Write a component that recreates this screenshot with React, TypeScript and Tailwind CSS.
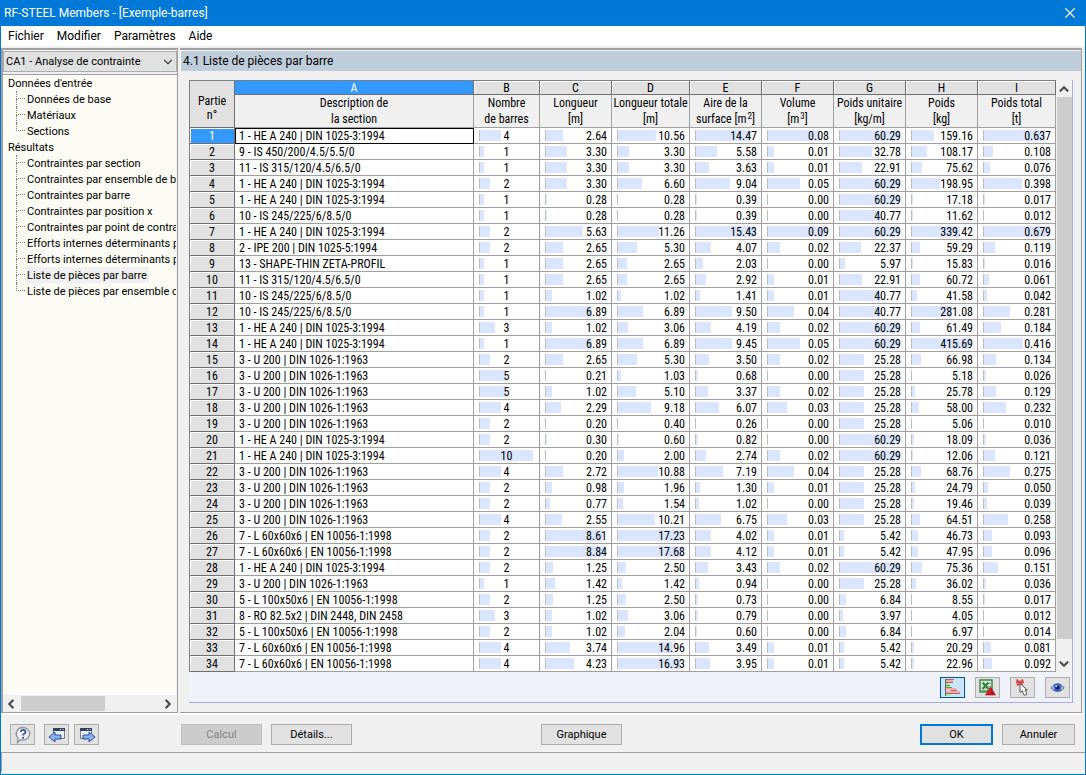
import { ChevronDown, ChevronLeft, ChevronRight, ChevronUp, X } from "lucide-react";
import clsx from "clsx";
import type { ReactNode } from "react";

type Row = [string, number, string, string, string, string, string, string, string];

const menus = ["Fichier", "Modifier", "Paramètres", "Aide"];

const tree = [
  { title: "Données d'entrée", items: ["Données de base", "Matériaux", "Sections"] },
  {
    title: "Résultats",
    items: [
      "Contraintes par section",
      "Contraintes par ensemble de barres",
      "Contraintes par barre",
      "Contraintes par position x",
      "Contraintes par point de contrainte",
      "Efforts internes déterminants par",
      "Efforts internes déterminants par",
      "Liste de pièces par barre",
      "Liste de pièces par ensemble de",
    ],
  },
];

const selectedItem = "Liste de pièces par barre";

const columns: { letter: string; top: string; bottom: ReactNode; max: number; width: string }[] = [
  { letter: "B", top: "Nombre", bottom: "de barres", max: 10, width: "w-[66px]" },
  { letter: "C", top: "Longueur", bottom: "[m]", max: 8.84, width: "w-[72px]" },
  { letter: "D", top: "Longueur totale", bottom: "[m]", max: 17.68, width: "w-[78px]" },
  { letter: "E", top: "Aire de la", bottom: <>surface [m<Sup>2</Sup>]</>, max: 15.43, width: "w-[72px]" },
  { letter: "F", top: "Volume", bottom: <>[m<Sup>3</Sup>]</>, max: 0.09, width: "w-[72px]" },
  { letter: "G", top: "Poids unitaire", bottom: "[kg/m]", max: 60.29, width: "w-[72px]" },
  { letter: "H", top: "Poids", bottom: "[kg]", max: 415.69, width: "w-[72px]" },
  { letter: "I", top: "Poids total", bottom: "[t]", max: 0.679, width: "w-[78px]" },
];

const HEA = "1 - HE A 240 | DIN 1025-3:1994";
const U200 = "3 - U 200 | DIN 1026-1:1963";
const L60 = "7 - L 60x60x6 | EN 10056-1:1998";
const L100 = "5 - L 100x50x6 | EN 10056-1:1998";

const rows: Row[] = [
  [HEA, 4, "2.64", "10.56", "14.47", "0.08", "60.29", "159.16", "0.637"],
  ["9 - IS 450/200/4.5/5.5/0", 1, "3.30", "3.30", "5.58", "0.01", "32.78", "108.17", "0.108"],
  ["11 - IS 315/120/4.5/6.5/0", 1, "3.30", "3.30", "3.63", "0.01", "22.91", "75.62", "0.076"],
  [HEA, 2, "3.30", "6.60", "9.04", "0.05", "60.29", "198.95", "0.398"],
  [HEA, 1, "0.28", "0.28", "0.39", "0.00", "60.29", "17.18", "0.017"],
  ["10 - IS 245/225/6/8.5/0", 1, "0.28", "0.28", "0.39", "0.00", "40.77", "11.62", "0.012"],
  [HEA, 2, "5.63", "11.26", "15.43", "0.09", "60.29", "339.42", "0.679"],
  ["2 - IPE 200 | DIN 1025-5:1994", 2, "2.65", "5.30", "4.07", "0.02", "22.37", "59.29", "0.119"],
  ["13 - SHAPE-THIN ZETA-PROFIL", 1, "2.65", "2.65", "2.03", "0.00", "5.97", "15.83", "0.016"],
  ["11 - IS 315/120/4.5/6.5/0", 1, "2.65", "2.65", "2.92", "0.01", "22.91", "60.72", "0.061"],
  ["10 - IS 245/225/6/8.5/0", 1, "1.02", "1.02", "1.41", "0.01", "40.77", "41.58", "0.042"],
  ["10 - IS 245/225/6/8.5/0", 1, "6.89", "6.89", "9.50", "0.04", "40.77", "281.08", "0.281"],
  [HEA, 3, "1.02", "3.06", "4.19", "0.02", "60.29", "61.49", "0.184"],
  [HEA, 1, "6.89", "6.89", "9.45", "0.05", "60.29", "415.69", "0.416"],
  [U200, 2, "2.65", "5.30", "3.50", "0.02", "25.28", "66.98", "0.134"],
  [U200, 5, "0.21", "1.03", "0.68", "0.00", "25.28", "5.18", "0.026"],
  [U200, 5, "1.02", "5.10", "3.37", "0.02", "25.28", "25.78", "0.129"],
  [U200, 4, "2.29", "9.18", "6.07", "0.03", "25.28", "58.00", "0.232"],
  [U200, 2, "0.20", "0.40", "0.26", "0.00", "25.28", "5.06", "0.010"],
  [HEA, 2, "0.30", "0.60", "0.82", "0.00", "60.29", "18.09", "0.036"],
  [HEA, 10, "0.20", "2.00", "2.74", "0.02", "60.29", "12.06", "0.121"],
  [U200, 4, "2.72", "10.88", "7.19", "0.04", "25.28", "68.76", "0.275"],
  [U200, 2, "0.98", "1.96", "1.30", "0.01", "25.28", "24.79", "0.050"],
  [U200, 2, "0.77", "1.54", "1.02", "0.00", "25.28", "19.46", "0.039"],
  [U200, 4, "2.55", "10.21", "6.75", "0.03", "25.28", "64.51", "0.258"],
  [L60, 2, "8.61", "17.23", "4.02", "0.01", "5.42", "46.73", "0.093"],
  [L60, 2, "8.84", "17.68", "4.12", "0.01", "5.42", "47.95", "0.096"],
  [HEA, 2, "1.25", "2.50", "3.43", "0.02", "60.29", "75.36", "0.151"],
  [U200, 1, "1.42", "1.42", "0.94", "0.00", "25.28", "36.02", "0.036"],
  [L100, 2, "1.25", "2.50", "0.73", "0.00", "6.84", "8.55", "0.017"],
  ["8 - RO 82.5x2 | DIN 2448, DIN 2458", 3, "1.02", "3.06", "0.79", "0.00", "3.97", "4.05", "0.012"],
  [L100, 2, "1.02", "2.04", "0.60", "0.00", "6.84", "6.97", "0.014"],
  [L60, 4, "3.74", "14.96", "3.49", "0.01", "5.42", "20.29", "0.081"],
  [L60, 4, "4.23", "16.93", "3.95", "0.01", "5.42", "22.96", "0.092"],
];

function Sup({ children }: { children: ReactNode }) {
  return <sup className="relative -top-1 ml-px align-baseline text-[9px] leading-none">{children}</sup>;
}

function BarCell({ value, max, center }: { value: string; max: number; center?: boolean }) {
  return (
    <td className="border-r border-b border-[#a0a0a0] p-0">
      <div className="grid h-[15px] items-center">
        <div className="col-start-1 row-start-1 mr-1.5 ml-[5px]">
          <div
            className="h-[11px] min-w-px border-l border-[#c0c0c0] bg-[#dae5ff]"
            style={{ width: `${(Number(value) / max) * 100}%` }}
          />
        </div>
        <span
          className={clsx(
            "z-10 col-start-1 row-start-1 pt-px leading-[14px]",
            center ? "text-center" : "pr-1 text-right"
          )}
        >
          {value}
        </span>
      </div>
    </td>
  );
}

function PartsTable() {
  return (
    <table className="w-full table-fixed border-separate border-spacing-0 border-t border-l border-[#808080] bg-white font-['Roboto_Condensed','Roboto',sans-serif] text-xs whitespace-nowrap text-black">
      <colgroup>
        <col className="w-[45px]" />
        <col />
        {columns.map((c) => (
          <col key={c.letter} className={c.width} />
        ))}
      </colgroup>
      <thead>
        <tr className="h-[14px]">
          <th
            rowSpan={2}
            className="border-r border-b border-[#707070] bg-[#e1e1e1] p-0 pt-2 font-normal leading-[14px]"
          >
            Partie
            <br />
            n°
          </th>
          <th className="border-r border-b border-[#707070] bg-[#3399ff] p-0 pt-px leading-3 font-normal text-white">A</th>
          {columns.map((c) => (
            <th
              key={c.letter}
              className="border-r border-b border-[#707070] bg-[#e1e1e1] p-0 pt-px leading-3 font-normal shadow-[inset_1px_1px_0_#fff]"
            >
              {c.letter}
            </th>
          ))}
        </tr>
        <tr className="h-[33px]">
          <th className="border-r border-b border-[#a0a0a0] bg-[#f0f0f0] p-0 leading-4 font-normal">
            Description de
            <br />
            la section
          </th>
          {columns.map((c) => (
            <th key={c.letter} className="border-r border-b border-[#a0a0a0] bg-[#f0f0f0] p-0 leading-4 font-normal">
              {c.top}
              <br />
              {c.bottom}
            </th>
          ))}
        </tr>
      </thead>
      <tbody>
        {rows.map((row, i) => (
          <tr key={i} className="h-4">
            <th
              className={clsx(
                "border-r border-b border-[#707070] p-0 pt-px leading-[14px] font-normal shadow-[inset_1px_1px_0_#fff]",
                i === 0 ? "bg-[#3399ff] text-white" : "bg-[#e1e1e1]"
              )}
            >
              {i + 1}
            </th>
            <td
              className={clsx(
                "border-r border-b border-[#a0a0a0] p-0 pt-px pl-1 leading-[14px]",
                i === 0 && "outline outline-1 -outline-offset-1 outline-black"
              )}
            >
              {row[0]}
            </td>
            {columns.map((c, j) => (
              <BarCell key={c.letter} value={String(row[j + 1])} max={c.max} center={j === 0} />
            ))}
          </tr>
        ))}
      </tbody>
    </table>
  );
}

function TreeNav() {
  return (
    <nav className="mr-px flex-1 overflow-hidden bg-[#fcfcf4] whitespace-nowrap">
      {tree.map((group) => (
        <div key={group.title}>
          <div className="h-4 pt-px pl-[5px] leading-4">{group.title}</div>
          <ul>
            {group.items.map((item, i) => (
              <li key={i} className="flex h-4 pl-[13px]">
                <span className="mr-px h-4 w-[9px] shrink-0">
                  <span className="block h-2 border-b border-l border-dotted border-[#808080]" />
                  {i < group.items.length - 1 && (
                    <span className="block h-2 border-l border-dotted border-[#808080]" />
                  )}
                </span>
                <button
                  className={clsx(
                    "h-4 min-w-0 overflow-hidden px-px pt-px text-left leading-4",
                    item === selectedItem && "bg-[#f0f0f0] pr-0.5"
                  )}
                >
                  {item}
                </button>
              </li>
            ))}
          </ul>
        </div>
      ))}
    </nav>
  );
}

function IconButton({ label, active, children }: { label: string; active?: boolean; children: ReactNode }) {
  return (
    <button
      aria-label={label}
      className={clsx(
        "flex h-[21px] w-[25px] items-center justify-center border",
        active ? "border-[#005499] bg-[#cce4f7]" : "border-[#adadad] bg-[#e1e1e1]"
      )}
    >
      {children}
    </button>
  );
}

function PushButton({ children, className, disabled }: { children: ReactNode; className: string; disabled?: boolean }) {
  return (
    <button
      disabled={disabled}
      className={clsx(
        "h-[21px] pt-px leading-4",
        disabled ? "border border-[#bfbfbf] bg-[#cccccc] text-[#838383]" : "bg-[#e1e1e1]",
        className
      )}
    >
      {children}
    </button>
  );
}

const BarsIcon = () => (
  <svg width="17" height="17" viewBox="0 0 17 17" shapeRendering="crispEdges">
    <path d="M2 2h7M2 10h10M2 13h14" stroke="#ffa3a3" strokeWidth="2" />
    <path d="M2 5h3M2 8h4M2 16h5" stroke="#a2eda2" strokeWidth="2" />
    <path d="M2 .500h8M2 3.500h7M7 11.500h6M2 14.500h14" stroke="#a06c6c" />
    <path d="M2 6.500h4M2 8.500h6" stroke="#5b9c5b" />
    <path d="M1.500 0V17" stroke="#666" />
  </svg>
);

const ExcelIcon = () => (
  <svg width="17" height="17" viewBox="0 0 17 17">
    <rect x="1" y="1" width="12" height="12" fill="#dff0df" stroke="#357f3c" strokeWidth="1.400" />
    <path d="M9.500 4.500h3M9.500 7.500h3M2 11.500h10" stroke="#6da873" />
    <path d="M3.500 3.500l6 6.500M9.500 3.500l-6 6.500" stroke="#2f8038" strokeWidth="2.200" />
    <path d="M11.500 8L16.500 16H6.500z" fill="#dd1a22" stroke="#96151a" strokeWidth=".6" />
    <path d="M12 10v5.500h3.500z" fill="#a81218" />
  </svg>
);

const PickIcon = () => (
  <svg width="17" height="17" viewBox="0 0 17 17">
    <path d="M2.500 .500l6 6M9 .500l-6 6M2 3.300h8" stroke="#dc4a4e" strokeWidth="2" />
    <path d="M6 4.500v9l2.200-1.700 2 4.500 2.800-1.200-2-4.100h2.300z" fill="#fff" stroke="#555" />
  </svg>
);

const EyeIcon = () => (
  <svg width="17" height="17" viewBox="0 0 17 17">
    <path d="M2 9c3-5.500 10-5.500 13 0-3 4.500-10 4.500-13 0z" fill="#c9d3ea" stroke="#5a6784" />
    <circle cx="8.500" cy="8.500" r="4" fill="#3563d0" />
    <circle cx="8.500" cy="8.500" r="1.900" fill="#101c48" />
    <circle cx="7.300" cy="7.200" r="1" fill="#b9d2ff" />
  </svg>
);

const HelpIcon = () => (
  <svg width="18" height="18" viewBox="0 0 18 18">
    <path
      d="M9 1.500a6.800 6.300 0 1 1-2.500 12.200L3.500 16.500l.5-4.500A6.800 6.300 0 0 1 9 1.500z"
      fill="#eef0f5"
      stroke="#8d929c"
      strokeWidth="1.300"
    />
    <path d="M6.800 5.800q.3-2 2.500-2t2.200 2q0 1.300-1.400 2-.9.500-.9 1.700" fill="none" stroke="#3a5690" strokeWidth="1.800" />
    <circle cx="9.100" cy="11.800" r="1.100" fill="#3a5690" />
  </svg>
);

const WindowArrowIcon = ({ next }: { next?: boolean }) => (
  <svg width="18" height="18" viewBox="0 0 18 18">
    <path d={next ? "M2.500 2.500h11v10h-11z" : "M5.500 2.500h11v10h-11z"} fill="#eef0f4" stroke="#7b7f88" />
    <path d={next ? "M2 2h12v3H2z" : "M5 2h12v3H5z"} fill="#34405f" />
    <path d={next ? "M9 3.500h1M11.500 3.500h1" : "M12 3.500h1M14.500 3.500h1"} stroke="#dfe6f5" />
    <path
      d={next ? "M5 9h6V6l6 5-6 5v-3H5z" : "M13 9H7V6l-6 5 6 5v-3h6z"}
      fill="#86b1f2"
      stroke="#2d4f98"
    />
  </svg>
);

export default function App() {
  return (
    <div className="flex h-screen flex-col overflow-hidden border border-t-0 border-[#0078d7] bg-[#f0f0f0] font-['Roboto','Noto_Sans',sans-serif] text-[11px] text-black">
      <header className="flex h-[26px] shrink-0 items-center justify-between bg-[#0078d7] pr-1.5 pl-[3px] text-white">
        <h1 className="text-xs">RF-STEEL Members - [Exemple-barres]</h1>
        <button aria-label="Fermer">
          <X size={18} strokeWidth={1.5} />
        </button>
      </header>

      <div className="flex h-5 shrink-0 items-center gap-[13px] bg-white pl-[7px] text-xs">
        {menus.map((m) => (
          <button key={m}>{m}</button>
        ))}
      </div>

      <div className="mt-0.5 flex min-h-0 flex-1">
        <aside className="mr-[2px] flex w-[177px] shrink-0 flex-col border-2 border-r border-b border-[#a0a0a0]">
          <div className="grid shrink-0 items-center border-t border-b border-t-white border-b-[#a0a0a0] pb-0.5">
            <select
              aria-label="Cas"
              className="col-start-1 row-start-1 h-[21px] w-full appearance-none border border-[#adadad] bg-[#e1e1e1] pt-0.5 pl-0.5"
            >
              <option>CA1 - Analyse de contrainte</option>
            </select>
            <ChevronDown
              size={14}
              strokeWidth={2}
              className="pointer-events-none col-start-1 row-start-1 mr-0.5 justify-self-end text-[#444]"
            />
          </div>
          <TreeNav />
          <div className="flex h-[17px] shrink-0 items-center bg-[#f0f0f0] text-[#505050]">
            <ChevronLeft size={14} strokeWidth={4} className="mr-[3px] ml-px" />
            <div className="h-[15px] w-[84px] bg-[#cdcdcd]" />
            <ChevronRight size={14} strokeWidth={4} className="mr-0.5 ml-auto" />
          </div>
        </aside>

        <main className="mr-[3px] flex min-w-0 flex-1 flex-col border-t-2 border-r border-b border-[#a0a0a0]">
          <h2 className="mt-px h-5 shrink-0 border-l border-white bg-[#bfcddb] pl-0.5 text-xs leading-5">
            4.1 Liste de pièces par barre
          </h2>
          <div className="mt-[9px] mr-2 mb-[9px] ml-[9px] flex min-h-0 flex-1 flex-col border-r border-b border-[#a6a8ea] bg-[#eff3f9]">
            <div className="flex shrink-0">
              <div className="min-w-0 flex-1">
                <PartsTable />
              </div>
              <div className="flex w-4 shrink-0 flex-col items-center bg-[#f0f0f0] text-[#505050]">
                <ChevronUp size={14} strokeWidth={4} className="mt-0.5 mb-px shrink-0" />
                <div className="w-[15px] flex-1 bg-[#cdcdcd]" />
                <div className="h-[18px]" />
                <ChevronDown size={14} strokeWidth={4} className="mb-px shrink-0" />
              </div>
            </div>
            <div className="mt-[5px] flex justify-end gap-2.5 pr-0.5">
              <IconButton label="Barres" active>
                <BarsIcon />
              </IconButton>
              <IconButton label="Exporter vers Excel">
                <ExcelIcon />
              </IconButton>
              <IconButton label="Sélectionner">
                <PickIcon />
              </IconButton>
              <IconButton label="Vue">
                <EyeIcon />
              </IconButton>
            </div>
          </div>
        </main>
      </div>

      <footer className="shrink-0 border-t-2 border-white">
        <div className="flex items-center pt-[9px] pr-2.5 pb-[7px] pl-[9px]">
          <div className="flex w-[171px] shrink-0">
            <IconButton label="Aide">
              <HelpIcon />
            </IconButton>
            <div className="ml-[9px] flex gap-[5px]">
              <IconButton label="Précédent">
                <WindowArrowIcon />
              </IconButton>
              <IconButton label="Suivant">
                <WindowArrowIcon next />
              </IconButton>
            </div>
          </div>
          <PushButton className="w-[81px]" disabled>
            Calcul
          </PushButton>
          <PushButton className="ml-[9px] w-[81px] border border-[#adadad]">Détails...</PushButton>
          <PushButton className="ml-[189px] w-[81px] border border-[#adadad]">Graphique</PushButton>
          <PushButton className="ml-auto w-[73px] border-2 border-[#0078d7]">OK</PushButton>
          <PushButton className="ml-[9px] w-[73px] border border-[#adadad]">Annuler</PushButton>
        </div>
        <div className="mb-0.5 h-5 border-t border-b border-l border-t-[#a0a0a0] border-b-white border-l-[#a0a0a0]" />
      </footer>
    </div>
  );
}
